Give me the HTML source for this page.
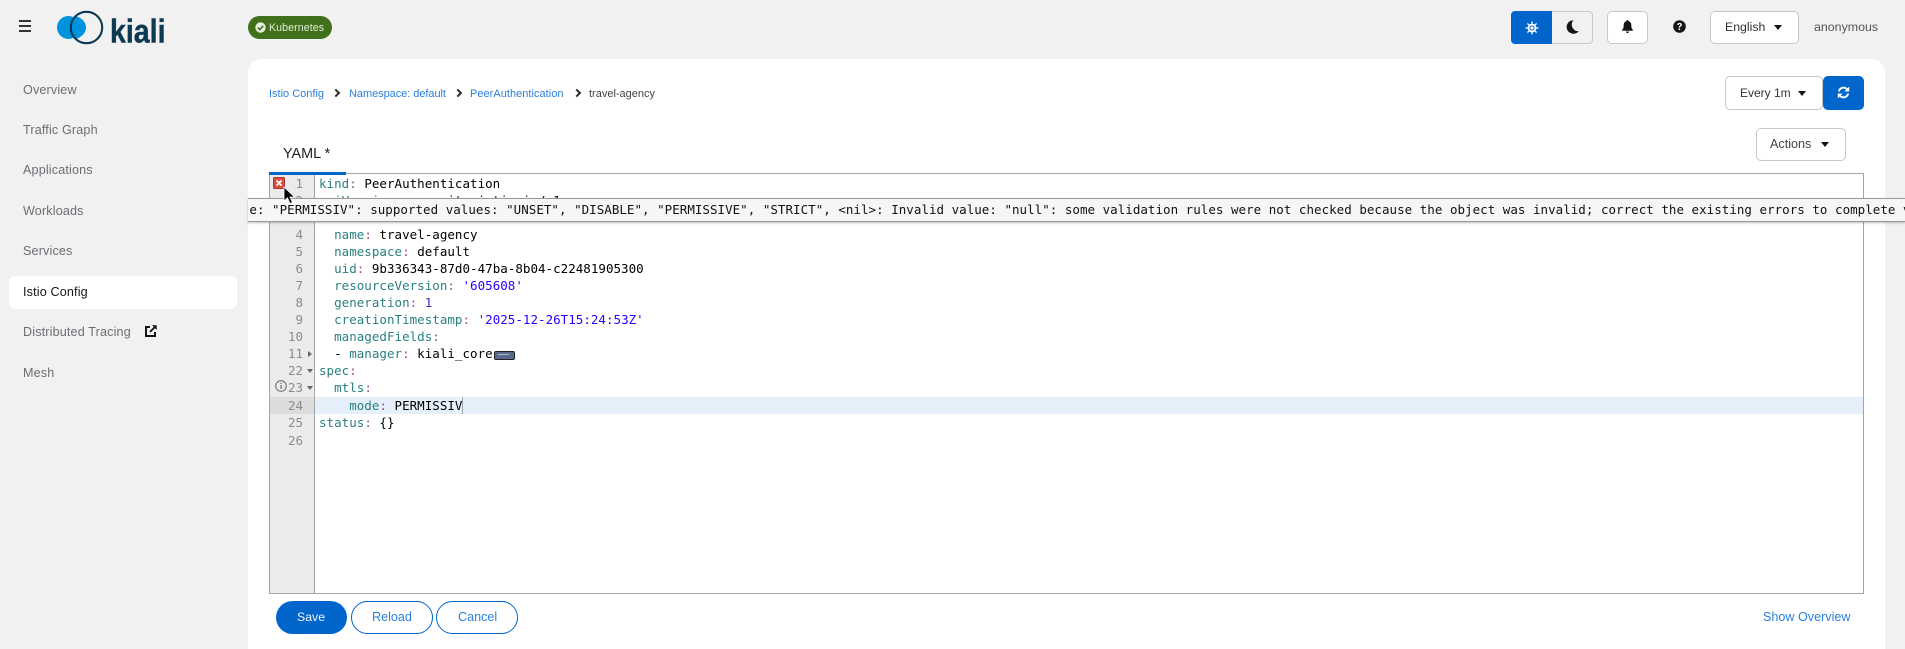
<!DOCTYPE html>
<html><head><meta charset="utf-8"><title>Kiali</title>
<style>
html,body{margin:0;padding:0;width:1905px;height:649px;overflow:hidden;background:#f1f1f1}
body{position:relative;font-family:"Liberation Sans",sans-serif;color:#151515}
.a{position:absolute;white-space:nowrap}
.nav{left:23px;font-size:12.6px;color:#6a6e73;line-height:16px;letter-spacing:.15px}
.btn{position:absolute;box-sizing:border-box;border:1px solid #c7c7c7;border-radius:4px;background:#fff}
.t{font-size:12.6px;line-height:16px}
.caret{position:absolute;width:0;height:0;border-left:5px solid transparent;border-right:5px solid transparent;border-top:5px solid #151515}
.bl{color:#2b7fdc;font-size:11px;line-height:14px}
.sep{position:absolute;top:89.500px;width:4px;height:4px;border-top:2px solid #2a2a2a;border-right:2px solid #2a2a2a;transform:rotate(45deg)}
.code{font-family:"DejaVu Sans Mono","Liberation Mono",monospace;font-size:12.5px;line-height:17px;letter-spacing:.025px;color:#000;white-space:pre}
.r{position:absolute;left:319px;height:17px}
.g{position:absolute;left:270px;width:33px;text-align:right;height:17px;color:#8c8c8c;letter-spacing:0}
.k{color:#2a8080}.c{color:#a0528c}.s{color:#2a00ff}.n{color:#2f2fc0}
.fold{position:absolute;width:0;height:0}
.fd{left:306.500px;border-left:3px solid transparent;border-right:3px solid transparent;border-top:4px solid #666}
.fr{left:307.500px;border-top:3px solid transparent;border-bottom:3px solid transparent;border-left:4px solid #666}
</style></head><body>

<!-- hamburger -->
<div class="a" style="left:19px;top:20px;width:12px;height:1.500px;background:#333"></div>
<div class="a" style="left:19px;top:25px;width:12px;height:1.500px;background:#333"></div>
<div class="a" style="left:19px;top:30px;width:12px;height:1.500px;background:#333"></div>

<!-- logo -->
<svg class="a" style="left:50px;top:5px" width="125" height="45" viewBox="50 5 125 45">
<circle cx="68.500" cy="27.500" r="11.500" fill="#0093dd"/>
<path d="M75 15.600C82 18 86 22 86 27.500C86 33 82 37 75 39.400C71 35 71 20 75 15.600Z" fill="#0093dd"/>
<circle cx="86.500" cy="27.500" r="15.700" fill="none" stroke="#0c3a52" stroke-width="2.100"/>
<text x="110" y="42.500" font-family="Liberation Sans,sans-serif" font-weight="700" font-size="33" fill="#0c3a52" stroke="#0c3a52" stroke-width=".4" textLength="55.500" lengthAdjust="spacingAndGlyphs">kiali</text>
</svg>

<!-- k8s pill -->
<div class="a" style="left:248px;top:16px;width:84px;height:23px;border-radius:12px;background:#40701a"></div>
<svg class="a" style="left:255px;top:22px" width="11" height="11" viewBox="0 0 11 11"><circle cx="5.500" cy="5.500" r="5.200" fill="#eaf3e2"/><path d="M2.800 5.600L4.800 7.600L8.200 3.800" fill="none" stroke="#40701a" stroke-width="1.600"/></svg>
<div class="a" style="left:269px;top:21px;font-size:10.600px;line-height:14px;color:#e4ecdc;letter-spacing:.1px">Kubernetes</div>

<!-- sidebar -->
<div class="a" style="left:9px;top:276px;width:228px;height:33px;background:#fff;border-radius:6px"></div>
<div class="a nav" style="top:82px">Overview</div>
<div class="a nav" style="top:122px">Traffic Graph</div>
<div class="a nav" style="top:162px">Applications</div>
<div class="a nav" style="top:203px">Workloads</div>
<div class="a nav" style="top:243px">Services</div>
<div class="a nav" style="top:284px;color:#151515">Istio Config</div>
<div class="a nav" style="top:324px">Distributed Tracing</div>
<svg class="a" style="left:145px;top:325px" width="12" height="12" viewBox="0 0 12 12"><path d="M5 2H1V11H10V7" fill="none" stroke="#151515" stroke-width="2"/><path d="M7 .300H11.700V5L9.900 3.200L5.600 7.600L4.300 6.300L8.700 2Z" fill="#151515"/></svg>
<div class="a nav" style="top:365px">Mesh</div>

<!-- top right -->
<div class="a" style="left:1511px;top:11px;width:41px;height:33px;background:#0066cc;border-radius:4px 0 0 4px"></div>
<svg class="a" style="left:1525px;top:21px" width="14" height="14" viewBox="0 0 14 14"><g stroke="#fff" stroke-width="1.300"><path d="M7 .500V13.500M.500 7H13.500M2.400 2.400L11.600 11.600M11.600 2.400L2.400 11.600"/></g><circle cx="7" cy="7" r="4.400" fill="#fff"/><circle cx="7" cy="7" r="2.600" fill="#0066cc"/><circle cx="7" cy="7" r="1.600" fill="#fff"/></svg>
<div class="a" style="left:1552px;top:11px;width:41px;height:33px;box-sizing:border-box;border:1px solid #c7c7c7;border-left:0;border-radius:0 4px 4px 0;background:#f1f1f1"></div>
<svg class="a" style="left:1566px;top:20px" width="13" height="14" viewBox="0 0 13 14"><path d="M7.500 .200A6.800 6.800 0 1 0 12.800 11.200A6.600 6.600 0 0 1 7.500 .200Z" fill="#151515"/></svg>
<div class="btn" style="left:1607px;top:11px;width:41px;height:33px;border-radius:5px"></div>
<svg class="a" style="left:1622px;top:20px" width="11" height="13.500" viewBox="0 0 13 15" preserveAspectRatio="none"><path d="M6.500 0C5.700 0 5.300.6 5.300 1.300C3 1.900 2 3.600 2 6C2 8.600 1.400 9.800 .2 11V12H12.800V11C11.600 9.800 11 8.600 11 6C11 3.600 10 1.900 7.700 1.300C7.700.6 7.300 0 6.500 0ZM4.800 12.800C4.800 13.900 5.500 14.600 6.500 14.600S8.200 13.900 8.200 12.800Z" fill="#151515"/></svg>
<svg class="a" style="left:1673px;top:20px" width="13" height="13" viewBox="0 0 13 13"><circle cx="6.500" cy="6.500" r="6.300" fill="#151515"/><path d="M4.200 5C4.300 3.600 5.300 2.900 6.600 2.900C8 2.900 8.900 3.700 8.900 4.800C8.900 6.400 7 6.300 7 7.800H5.700C5.700 5.800 7.400 5.800 7.400 4.800C7.400 4.300 7 4.100 6.500 4.100C6 4.100 5.600 4.400 5.500 5Z" fill="#fff"/><rect x="5.600" y="8.500" width="1.500" height="1.500" fill="#fff"/></svg>
<div class="btn" style="left:1710px;top:11px;width:89px;height:33px;border-radius:5px"></div>
<div class="a t" style="left:1725px;top:19px;color:#333;font-size:12.300px">English</div>
<div class="caret" style="left:1774px;top:25px;border-left-width:4px;border-right-width:4px"></div>
<div class="a t" style="left:1814px;top:19px;color:#555;font-size:12.400px">anonymous</div>

<!-- main card -->
<div class="a" style="left:248px;top:59px;width:1637px;height:600px;background:#fff;border-radius:14px 14px 0 0"></div>

<!-- breadcrumb -->
<div class="a bl" style="left:269px;top:87px">Istio Config</div>
<div class="sep" style="left:333px"></div>
<div class="a bl" style="left:349px;top:87px;letter-spacing:-.05px">Namespace: default</div>
<div class="sep" style="left:455px"></div>
<div class="a bl" style="left:470px;top:87px;letter-spacing:.03px">PeerAuthentication</div>
<div class="sep" style="left:574px"></div>
<div class="a bl" style="left:589px;top:87px;color:#444">travel-agency</div>

<!-- every 1m -->
<div class="btn" style="left:1725px;top:76px;width:98px;height:34px;border-radius:5px"></div>
<div class="a t" style="left:1740px;top:85px;color:#333;font-size:12px">Every 1m</div>
<div class="caret" style="left:1798px;top:91px;border-left-width:4px;border-right-width:4px"></div>
<div class="a" style="left:1823px;top:76px;width:41px;height:34px;background:#0066cc;border-radius:5px"></div>
<svg class="a" style="left:1837px;top:86px" width="13" height="13" viewBox="0 0 13 13"><path d="M1.200 5.200A5.400 5.400 0 0 1 10.400 2.600L12 1V5.200H7.800L9.400 3.600A4 4 0 0 0 2.700 5.200ZM11.800 7.800A5.400 5.400 0 0 1 2.600 10.400L1 12V7.800H5.200L3.600 9.400A4 4 0 0 0 10.300 7.800Z" fill="#fff" stroke="#fff" stroke-width=".5"/></svg>

<!-- actions -->
<div class="btn" style="left:1756px;top:128px;width:90px;height:33px;border-radius:5px"></div>
<div class="a t" style="left:1770px;top:136px;color:#444">Actions</div>
<div class="caret" style="left:1821px;top:142px;border-left-width:4px;border-right-width:4px"></div>

<!-- tab -->
<div class="a" style="left:283px;top:146px;font-size:14.400px;line-height:16px;color:#222">YAML *</div>

<!-- editor -->
<div class="a" style="left:269px;top:173px;width:1595px;height:421px;box-sizing:border-box;border:1px solid #a5a5a5;background:#fff"></div>
<div class="a" style="left:270px;top:174px;width:44px;height:419px;background:#ebebeb;border-right:1px solid #a5a5a5"></div>
<div class="a" style="left:269px;top:172px;width:77px;height:2.500px;background:#0066cc"></div>
<div class="a" style="left:270px;top:397px;width:44px;height:17px;background:#dcdcdc"></div>
<div class="a" style="left:315px;top:397px;width:1548px;height:17px;background:#e6f0fb"></div>

<div class="code">
<div class="g" style="top:175px">1</div><div class="g" style="top:192px">2</div>
<div class="g" style="top:226px">4</div><div class="g" style="top:243px">5</div><div class="g" style="top:260px">6</div><div class="g" style="top:277px">7</div><div class="g" style="top:294px">8</div><div class="g" style="top:311px">9</div><div class="g" style="top:328px">10</div><div class="g" style="top:345px">11</div><div class="g" style="top:362px">22</div><div class="g" style="top:379px">23</div><div class="g" style="top:397px">24</div><div class="g" style="top:414px">25</div><div class="g" style="top:432px">26</div>

<div class="r" style="top:175px"><span class="k">kind</span><span class="c">:</span> PeerAuthentication</div>
<div class="r" style="top:192px"><span class="k">apiVersion</span><span class="c">:</span> security.istio.io/v1</div>
<div class="r" style="top:226px">  <span class="k">name</span><span class="c">:</span> travel-agency</div>
<div class="r" style="top:243px">  <span class="k">namespace</span><span class="c">:</span> default</div>
<div class="r" style="top:260px">  <span class="k">uid</span><span class="c">:</span> 9b336343-87d0-47ba-8b04-c22481905300</div>
<div class="r" style="top:277px">  <span class="k">resourceVersion</span><span class="c">:</span> <span class="s">'605608'</span></div>
<div class="r" style="top:294px">  <span class="k">generation</span><span class="c">:</span> <span class="n">1</span></div>
<div class="r" style="top:311px">  <span class="k">creationTimestamp</span><span class="c">:</span> <span class="s">'2025-12-26T15:24:53Z'</span></div>
<div class="r" style="top:328px">  <span class="k">managedFields</span><span class="c">:</span></div>
<div class="r" style="top:345px">  - <span class="k">manager</span><span class="c">:</span> kiali_core</div>
<div class="r" style="top:362px"><span class="k">spec</span><span class="c">:</span></div>
<div class="r" style="top:379px">  <span class="k">mtls</span><span class="c">:</span></div>
<div class="r" style="top:397px">    <span class="k">mode</span><span class="c">:</span> PERMISSIV</div>
<div class="r" style="top:414px"><span class="k">status</span><span class="c">:</span> {}</div>
</div>
<div class="a" style="left:462px;top:397px;width:1px;height:17px;background:#9aa6b8"></div>

<!-- fold marks -->
<div class="fold fr" style="top:351px"></div>
<div class="fold fd" style="top:369px"></div>
<div class="fold fd" style="top:386px"></div>
<!-- fold widget -->
<div class="a" style="left:494px;top:351px;width:19px;height:7px;border-radius:2px;background:#5a6a8a;border:1px solid #222"></div>
<div class="a" style="left:498px;top:354px;width:11px;height:1px;background:#aab6cc"></div>
<!-- info icon -->
<svg class="a" style="left:275px;top:380px" width="12" height="12" viewBox="0 0 12 12"><circle cx="6" cy="6" r="5.300" fill="none" stroke="#777" stroke-width="1.100"/><rect x="5.400" y="5" width="1.300" height="4" fill="#777"/><rect x="5.400" y="2.800" width="1.300" height="1.300" fill="#777"/></svg>
<!-- error icon -->
<svg class="a" style="left:273px;top:177px" width="12" height="12" viewBox="0 0 12 12"><rect x=".500" y=".500" width="11" height="11" rx="1" fill="#d9503f" stroke="#a33"/><path d="M3.500 3.500L8.500 8.500M8.500 3.500L3.500 8.500" stroke="#fff" stroke-width="1.800"/></svg>

<!-- tooltip -->
<div class="a" style="left:248px;top:198px;width:1657px;height:24px;box-sizing:border-box;background:#f6f6f6;border-top:1px solid #999;border-bottom:1px solid #999;box-shadow:0 1px 2px rgba(0,0,0,.25);overflow:hidden">
<div class="code" style="position:absolute;left:1.400px;top:1.500px;color:#111">e: "PERMISSIV": supported values: "UNSET", "DISABLE", "PERMISSIVE", "STRICT", &lt;nil&gt;: Invalid value: "null": some validation rules were not checked because the object was invalid; correct the existing errors to complete validation</div>
</div>

<!-- cursor -->
<svg class="a" style="left:283px;top:186px" width="13" height="20" viewBox="0 0 13 20"><path d="M1 1V15L4.500 11.800L7 17.500L9.500 16.400L7 11H11.500Z" fill="#000" stroke="#fff" stroke-width=".8"/></svg>

<!-- buttons -->
<div class="a" style="left:276px;top:601px;width:71px;height:33px;border-radius:17px;background:#0066cc"></div>
<div class="a t" style="left:297px;top:609px;color:#f0f5fb;font-size:12.300px">Save</div>
<div class="a" style="left:351px;top:601px;width:82px;height:33px;box-sizing:border-box;border:1px solid #0066cc;border-radius:17px;background:#fff"></div>
<div class="a t" style="left:372px;top:609px;color:#2b7fdc">Reload</div>
<div class="a" style="left:436px;top:601px;width:82px;height:33px;box-sizing:border-box;border:1px solid #0066cc;border-radius:17px;background:#fff"></div>
<div class="a t" style="left:458px;top:609px;color:#2b7fdc">Cancel</div>
<div class="a t" style="left:1763px;top:609px;color:#2b7fdc;font-size:12.600px">Show Overview</div>
</body></html>
